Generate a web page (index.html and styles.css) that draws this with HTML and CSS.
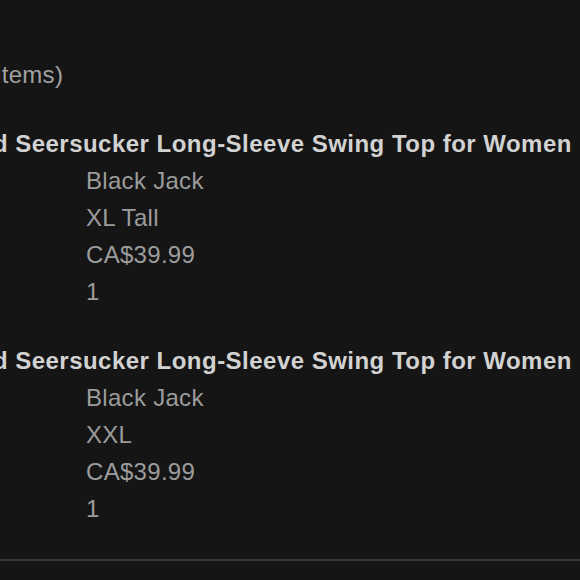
FILE: index.html
```html
<!DOCTYPE html>
<html>
<head>
<meta charset="utf-8">
<link rel="stylesheet" href="styles.css">
</head>
<body>
<div class="wrap">
  <div class="heading">Items (2 items)</div>
  <div class="item">
    <div class="title">Striped Seersucker Long-Sleeve Swing Top for Women</div>
    <div class="details">
      <div>Black Jack</div>
      <div>XL Tall</div>
      <div>CA$39.99</div>
      <div>1</div>
    </div>
  </div>
  <div class="item">
    <div class="title">Striped Seersucker Long-Sleeve Swing Top for Women</div>
    <div class="details">
      <div>Black Jack</div>
      <div>XXL</div>
      <div>CA$39.99</div>
      <div>1</div>
    </div>
  </div>
  <div class="rule"></div>
</div>
</body>
</html>
```
FILE: styles.css
```css
html, body {
  margin: 0;
  padding: 0;
  background: #151515;
  overflow: hidden;
}
body {
  font-family: "Liberation Sans", Arial, sans-serif;
  font-size: 24px;
  line-height: 37px;
  color: #9c9c9c;
  letter-spacing: 0.3px;
}
.wrap {
  padding-top: 56px;
  margin-left: -73px;
  width: 800px;
}
.heading {
  margin-left: -27px;
  white-space: nowrap;
  color: #a2a2a2;
}
.item {
  margin-top: 32px;
}
.title {
  margin-left: -5px;
  font-weight: bold;
  color: #d2d2d2;
  white-space: nowrap;
  letter-spacing: 0.48px;
}
.details {
  margin-left: 159px;
}
.rule {
  margin-top: 32px;
  height: 2px;
  background: #363636;
}
```
